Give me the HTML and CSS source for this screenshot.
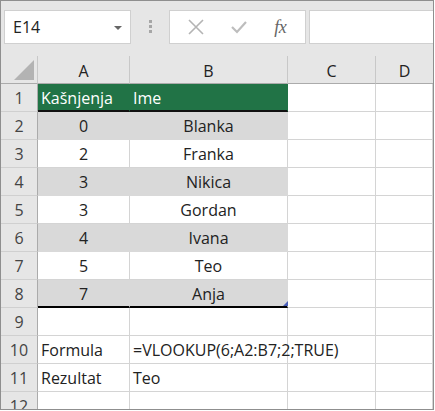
FILE: index.html
```html
<!DOCTYPE html>
<html lang="hr">
<head>
  <meta charset="UTF-8">
  <title>VLOOKUP</title>
  <link rel="stylesheet" href="styles.css">
</head>
<body>
<div class="frame">
  <div class="formula-bar">
    <div class="name-box">
      <span>E14</span>
      <span class="caret"></span>
    </div>
    <div class="grip"><i></i><i></i><i></i></div>
    <div class="buttons">
      <svg class="icon" width="18" height="18" viewBox="0 0 18 18"><path d="M2 2 L16 16 M16 2 L2 16" stroke="#b4b4b4" stroke-width="1.6" fill="none"/></svg>
      <svg class="icon" width="18" height="18" viewBox="0 0 18 18"><path d="M2 9 L7 14 L16 4" stroke="#bdbdbd" stroke-width="2.2" fill="none"/></svg>
      <span class="fx">fx</span>
    </div>
    <div class="formula-input"></div>
  </div>

  <div class="sheet">
    <div class="hd corner"><span class="tri"></span></div>
    <div class="hd col">A</div>
    <div class="hd col">B</div>
    <div class="hd col">C</div>
    <div class="hd col last">D</div>

    <div class="hd row">1</div>
    <div class="c green left">Kašnjenja</div>
    <div class="c green left">Ime</div>
    <div class="c"></div><div class="c"></div>

    <div class="hd row">2</div>
    <div class="c fill mid">0</div><div class="c fill mid">Blanka</div>
    <div class="c"></div><div class="c"></div>

    <div class="hd row">3</div>
    <div class="c mid">2</div><div class="c mid">Franka</div>
    <div class="c"></div><div class="c"></div>

    <div class="hd row">4</div>
    <div class="c fill mid">3</div><div class="c fill mid">Nikica</div>
    <div class="c"></div><div class="c"></div>

    <div class="hd row">5</div>
    <div class="c mid">3</div><div class="c mid">Gordan</div>
    <div class="c"></div><div class="c"></div>

    <div class="hd row">6</div>
    <div class="c fill mid">4</div><div class="c fill mid">Ivana</div>
    <div class="c"></div><div class="c"></div>

    <div class="hd row">7</div>
    <div class="c mid">5</div><div class="c mid">Teo</div>
    <div class="c"></div><div class="c"></div>

    <div class="hd row">8</div>
    <div class="c fill mid end">7</div><div class="c fill mid end handle">Anja</div>
    <div class="c"></div><div class="c"></div>

    <div class="hd row">9</div>
    <div class="c"></div><div class="c"></div>
    <div class="c"></div><div class="c"></div>

    <div class="hd row">10</div>
    <div class="c left">Formula</div>
    <div class="c left overflow">=VLOOKUP(6;A2:B7;2;TRUE)</div>
    <div class="c"></div><div class="c"></div>

    <div class="hd row">11</div>
    <div class="c left">Rezultat</div><div class="c left">Teo</div>
    <div class="c"></div><div class="c"></div>

    <div class="hd row">12</div>
    <div class="c"></div><div class="c"></div>
    <div class="c"></div><div class="c"></div>
  </div>
</div>
</body>
</html>
```

FILE: styles.css
```css
body {
  margin: 0;
  font-family: "Open Sans", "Noto Sans", sans-serif;
  background: #fff;
}

.frame {
  width: 432px;
  height: 408px;
  border: 1px solid #8f8f8f;
  overflow: hidden;
  background: #e6e6e6;
}

.formula-bar {
  height: 55px;
  display: flex;
  align-items: flex-start;
  padding: 9px 0 0 3px;
  box-sizing: border-box;
}

.name-box {
  box-sizing: border-box;
  width: 127px;
  height: 34px;
  background: #fff;
  border: 1px solid #d0d0d0;
  display: flex;
  align-items: center;
  justify-content: space-between;
  padding: 0 8px 0 8px;
  font-size: 16px;
  color: #222;
}

.caret {
  width: 0;
  height: 0;
  border-left: 4px solid transparent;
  border-right: 4px solid transparent;
  border-top: 4px solid #666;
  margin-top: 1px;
}

.grip {
  width: 38px;
  display: flex;
  flex-direction: column;
  align-items: center;
  gap: 2px;
  padding-top: 10px;
}

.grip i {
  width: 3px;
  height: 3px;
  background: #a6a6a6;
}

.buttons {
  width: 137px;
  height: 34px;
  box-sizing: border-box;
  background: #fff;
  border: 1px solid #d0d0d0;
  display: flex;
  align-items: center;
  justify-content: space-around;
  padding: 0 6px 0 4px;
}

.fx {
  font-family: "Liberation Serif", "DejaVu Serif", serif;
  font-style: italic;
  font-size: 18px;
  color: #666;
  letter-spacing: -0.5px;
}

.formula-input {
  flex: 1;
  height: 34px;
  box-sizing: border-box;
  background: #fff;
  border: 1px solid #d0d0d0;
  border-right: none;
  margin-left: 3px;
}

.sheet {
  display: grid;
  grid-template-columns: 37px 92px 158px 88px 1fr;
  grid-template-rows: 28px repeat(12, 28px);
  background: #fff;
  font-size: 16px;
}

.hd {
  background: #e6e6e6;
  color: #444;
  display: flex;
  align-items: center;
  justify-content: center;
  box-sizing: border-box;
}

.hd.col {
  border-right: 1px solid #c8c8c8;
  border-bottom: 1px solid #ababab;
  color: #222;
  padding-top: 2px;
}

.hd.col.last {
  border-right: none;
}

.hd.corner {
  border-right: 1px solid #c8c8c8;
  border-bottom: 1px solid #ababab;
  position: relative;
}

.tri {
  position: absolute;
  right: 3px;
  bottom: 3px;
  width: 0;
  height: 0;
  border-left: 20px solid transparent;
  border-bottom: 20px solid #b3b3b3;
}

.hd.row {
  border-right: 1px solid #ababab;
  border-bottom: 1px solid #d0d0d0;
}

.c {
  box-sizing: border-box;
  border-right: 1px solid #d4d4d4;
  border-bottom: 1px solid #d4d4d4;
  display: flex;
  align-items: center;
  color: #222;
  white-space: nowrap;
  padding-top: 1px;
}

.c.left {
  padding-left: 3px;
}

.c.mid {
  justify-content: center;
}

.c.green {
  background: #217346;
  color: #fff;
  border-color: #217346;
  border-bottom: 2px solid #111;
  padding-left: 3px;
}

.c.fill {
  background: #d9d9d9;
  border-color: #d9d9d9;
}

.c.end {
  border-bottom: 2px solid #000;
}

.c.handle {
  position: relative;
}

.c.handle::after {
  content: "";
  position: absolute;
  right: -1px;
  bottom: 0;
  width: 5px;
  height: 5px;
  background: #4a5fb8;
  clip-path: polygon(100% 0, 100% 100%, 0 100%);
}

.overflow {
  overflow: visible;
  position: relative;
  z-index: 1;
}
```
